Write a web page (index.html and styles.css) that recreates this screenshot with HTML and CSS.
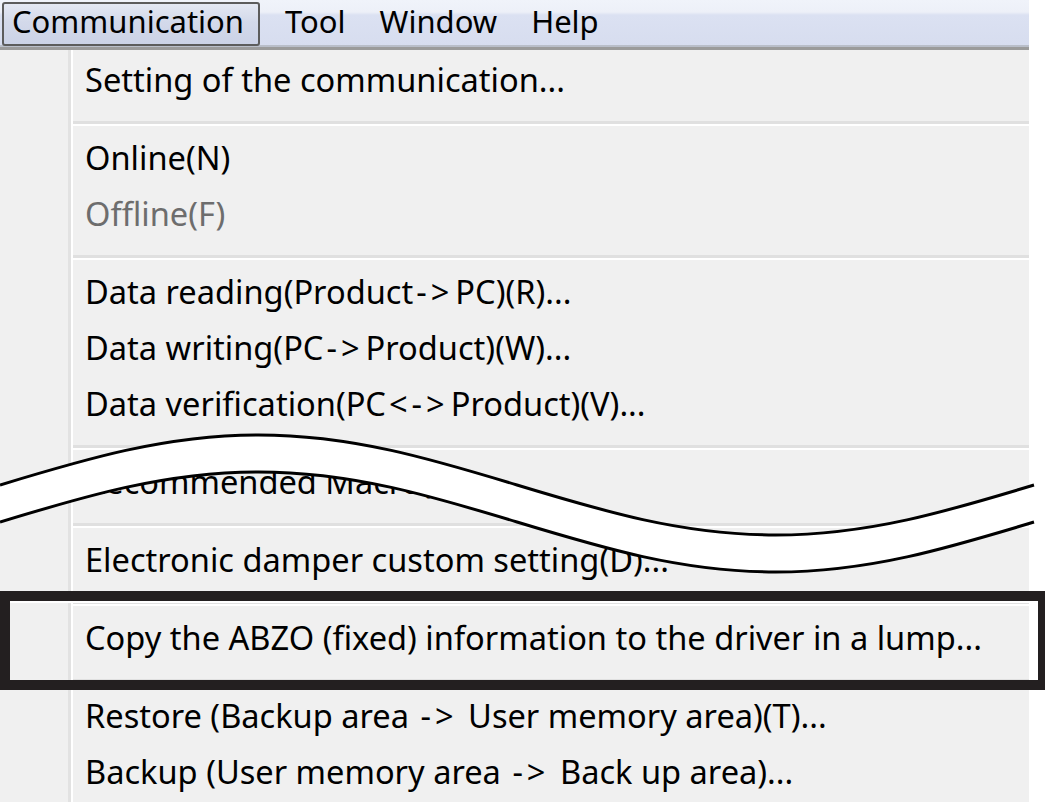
FILE: index.html
```html
<!DOCTYPE html>
<html lang="en">
<head>
<meta charset="utf-8">
<title>Communication menu</title>
<link rel="stylesheet" href="styles.css">
</head>
<body>
<div class="screen">
  <div class="menubar">
    <div class="mb-item active">Communication</div>
    <div class="mb-item">Tool</div>
    <div class="mb-item">Window</div>
    <div class="mb-item">Help</div>
  </div>
  <div class="menu">
    <div class="gutter"></div>
    <div class="list">
      <div class="item">Setting of the communication...</div>
      <div class="sep"></div>
      <div class="item">Online(N)</div>
      <div class="item disabled">Offline(F)</div>
      <div class="sep"></div>
      <div class="item">Data reading(Product<span class="arw">-&gt;</span>PC)(R)...</div>
      <div class="item">Data writing(PC<span class="arw">-&gt;</span>Product)(W)...</div>
      <div class="item">Data verification(PC<span class="arw">&lt;-&gt;</span>Product)(V)...</div>
      <div class="sep"></div>
      <div class="item">Recommended Macro(M)...</div>
      <div class="sep"></div>
      <div class="item">Electronic damper custom setting(D)...</div>
      <div class="sep"></div>
      <div class="item">Copy the ABZO (fixed) information to the driver in a lump...</div>
      <div class="sep"></div>
      <div class="item">Restore (Backup area <span class="arw">-&gt;</span> User memory area)(T)...</div>
      <div class="item">Backup (User memory area <span class="arw">-&gt;</span> Back up area)...</div>
    </div>
  </div>
  <svg class="wave" viewBox="0 0 1045 805" width="1045" height="805" aria-hidden="true">
    <path class="band" d="M0,485 C84.3,459.4 164.9,435 258.5,435 S432.7,459.4 517,485 S681.9,535 775.5,535 S949.7,510.6 1034,485 L1034,522 C949.7,547.6 869.1,572 775.5,572 S601.3,547.6 517,522 S352.1,472 258.5,472 S84.3,496.4 0,522 Z"/>
    <path class="edge" d="M0,485 C84.3,459.4 164.9,435 258.5,435 S432.7,459.4 517,485 S681.9,535 775.5,535 S949.7,510.6 1034,485"/>
    <path class="edge" d="M0,522 C84.3,496.4 164.9,472 258.5,472 S432.7,496.4 517,522 S681.9,572 775.5,572 S949.7,547.6 1034,522"/>
  </svg>
  <div class="callout"></div>
</div>
</body>
</html>
```
FILE: styles.css
```css
html, body {
  margin: 0;
  padding: 0;
  background: #ffffff;
}

body {
  width: 1045px;
  height: 805px;
  overflow: hidden;
  font-family: "Noto Sans", "DejaVu Sans", sans-serif;
  color: #000;
}

.screen {
  position: relative;
  width: 1045px;
  height: 805px;
}

/* ---------- menu bar ---------- */
.menubar {
  width: 1029px;
  height: 50px;
  box-sizing: border-box;
  display: flex;
  align-items: flex-start;
  background: linear-gradient(to bottom, #f0f3fa 0px, #edf0f8 12px, #dbe1f2 15px, #d7ddef 45px);
  border-bottom: 3px solid #9b9b9b;
  box-shadow: inset 0 -2px 0 #b9bec9;
}

.mb-item {
  margin-top: 2px;
  border: 2px solid transparent;
  border-radius: 3px;
  padding: 0 15px 6px;
  font-size: 31px;
  line-height: 34px;
  white-space: nowrap;
}

.mb-item.active {
  margin-left: 2px;
  margin-right: 8px;
  padding-left: 8px;
  padding-right: 14px;
  border-color: #5c5c5c;
  background: linear-gradient(to bottom, #e4e8f3 0%, #d3d9ea 45%, #cbd2e6 100%);
}

/* ---------- drop-down menu ---------- */
.menu {
  width: 1029px;
  display: flex;
  background: #f0f0f0;
}

.gutter {
  width: 68px;
  border-right: 3px solid #e2e2e2;
  flex: none;
}

.list {
  flex: 1;
  border-left: 2px solid #ffffff;
  padding: 2px 0 2px;
}

.item {
  height: 56px;
  line-height: 56px;
  padding-left: 12px;
  font-size: 32.6px;
  white-space: nowrap;
}

.item.disabled {
  color: #6d6d6d;
}

.arw {
  letter-spacing: 4px;
  padding: 0 2px 0 3px;
}

.sep {
  height: 5px;
  margin: 13px 0 4px;
  box-sizing: border-box;
  border-top: 3px solid #e0e0e0;
  border-bottom: 2px solid #ffffff;
}

/* ---------- annotation overlays ---------- */
.wave {
  position: absolute;
  left: 0;
  top: 0;
  pointer-events: none;
}

.wave .band {
  fill: #ffffff;
}

.wave .edge {
  fill: none;
  stroke: #000;
  stroke-width: 3;
}

.callout {
  position: absolute;
  left: 0;
  top: 591px;
  width: 1048px;
  height: 99px;
  box-sizing: border-box;
  border: 10px solid #231f20;
  box-shadow: inset 0 2px 0 #ffffff;
}
```
